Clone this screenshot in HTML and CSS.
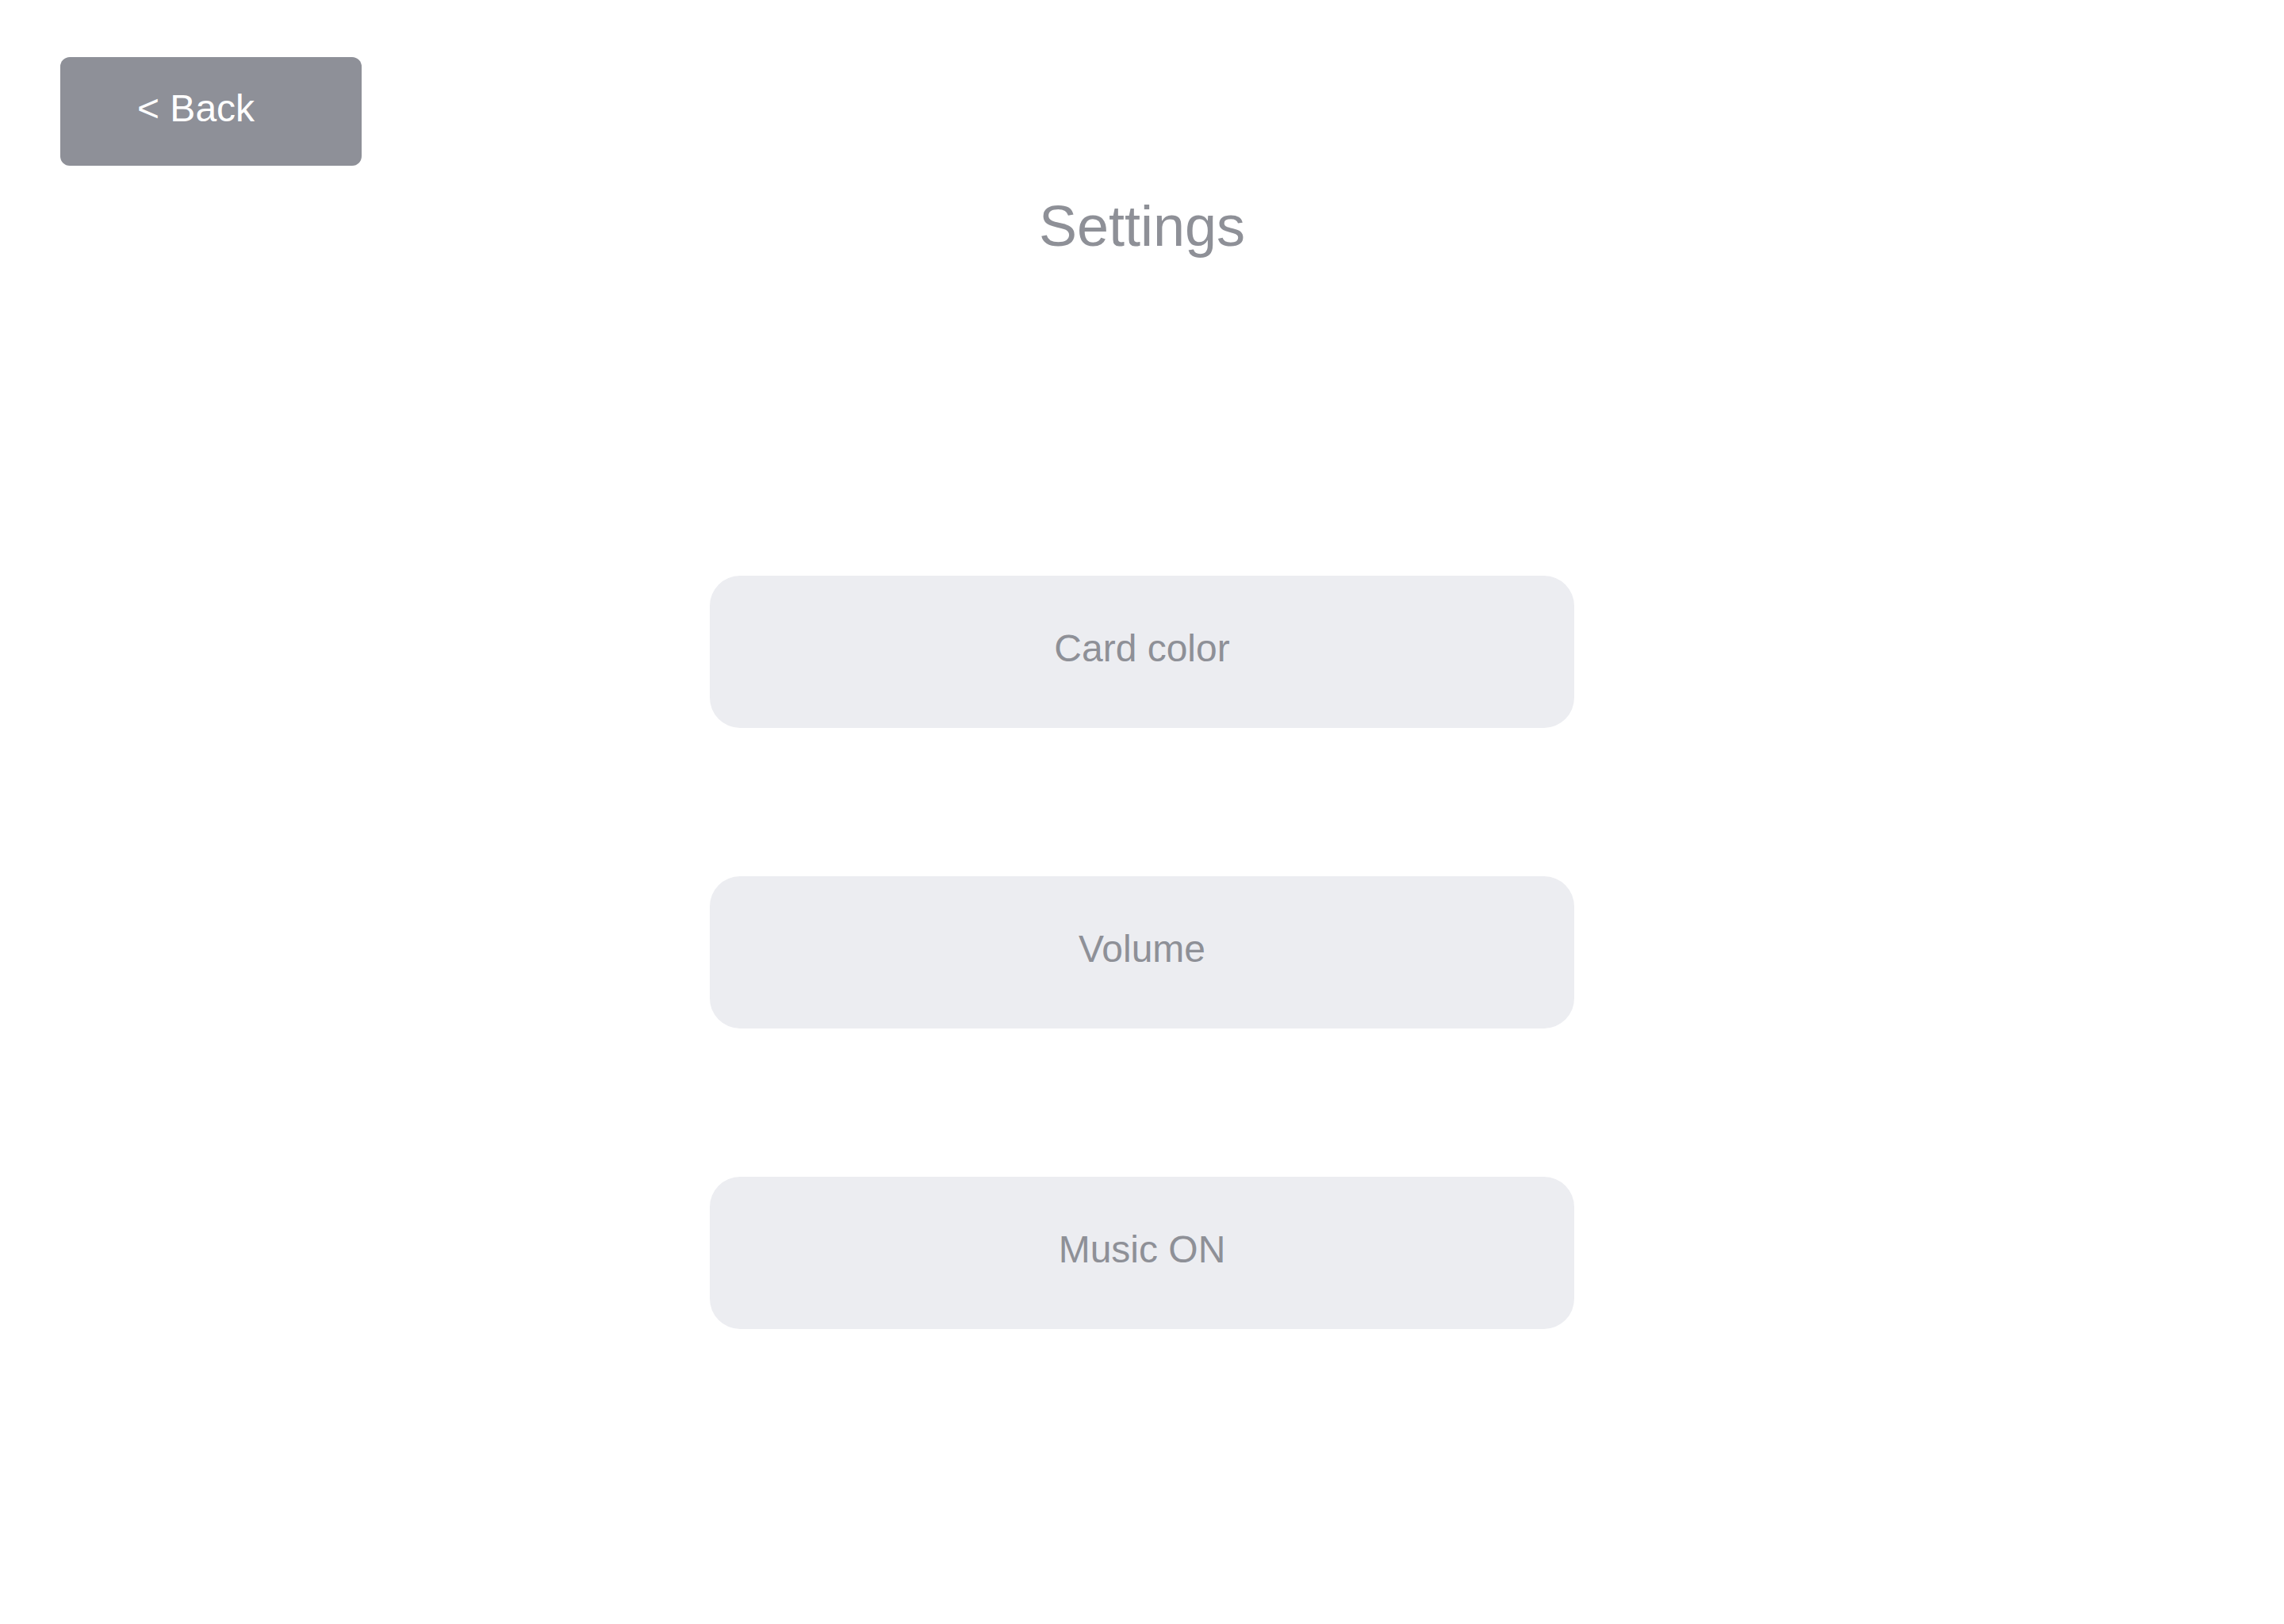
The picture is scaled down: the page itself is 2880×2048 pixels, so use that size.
FILE: index.html
```html
<!DOCTYPE html>
<html lang="en">
<head>
<meta charset="utf-8">
<title>Settings</title>
<link rel="stylesheet" href="styles.css">
</head>
<body>
  <div class="page">
    <header class="topbar">
      <button class="back-btn" type="button">&lt; Back</button>
    </header>
    <h1 class="title">Settings</h1>
    <main class="options">
      <button class="option" type="button">Card color</button>
      <button class="option" type="button">Volume</button>
      <button class="option" type="button">Music ON</button>
    </main>
  </div>
</body>
</html>
```

FILE: styles.css
```css
* {
  box-sizing: border-box;
}

html, body {
  margin: 0;
  padding: 0;
  background: #ffffff;
}

body {
  font-family: "Liberation Sans", Arial, sans-serif;
  width: 2880px;
  height: 2048px;
  overflow: hidden;
}

.page {
  display: flex;
  flex-direction: column;
  padding-top: 72px;
}

.topbar {
  display: flex;
  padding-left: 76px;
}

.back-btn {
  font-family: inherit;
  font-size: 48px;
  line-height: 48px;
  color: #ffffff;
  background: #8e9098;
  border: none;
  border-radius: 12px;
  width: 380px;
  height: 137px;
  padding: 0 0 7px 97px;
  margin: 0;
  display: flex;
  align-items: center;
  justify-content: flex-start;
  cursor: pointer;
}

.title {
  margin: 40px 0 0;
  font-size: 72px;
  line-height: 72px;
  font-weight: normal;
  color: #8e9097;
  text-align: center;
}

.options {
  display: flex;
  flex-direction: column;
  align-items: center;
  gap: 187px;
  margin-top: 405px;
}

.option {
  font-family: inherit;
  font-size: 48px;
  line-height: 48px;
  color: #8e9097;
  background: #ecedf1;
  border: none;
  border-radius: 38px;
  width: 1090px;
  height: 192px;
  margin: 0;
  padding: 0 0 9px;
  display: flex;
  align-items: center;
  justify-content: center;
  cursor: pointer;
}
```
